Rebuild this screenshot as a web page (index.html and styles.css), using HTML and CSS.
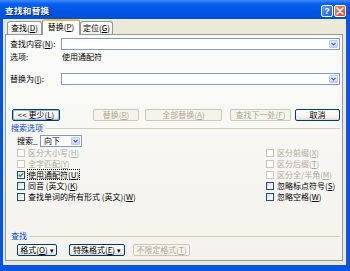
FILE: index.html
```html
<!DOCTYPE html>
<html lang="zh-CN">
<head>
    <meta charset="UTF-8">
    <title>查找和替换</title>
    <link rel="stylesheet" href="styles.css">
</head>
<body>
    <div class="window">
        <div class="titlebar">
            <span class="title">查找和替换</span>
            <div class="title-buttons">
                <span class="tbtn help">?</span>
                <span class="tbtn close">
                    <svg width="8" height="8" viewBox="0 0 8 8"><path d="M1 1L7 7M7 1L1 7" stroke="#fff" stroke-width="1.6" stroke-linecap="round"/></svg>
                </span>
            </div>
        </div>
        <div class="frame">
            <div class="client">
                <div class="tabs">
                    <div class="tab t1">查找(<u>D</u>)</div>
                    <div class="tab active">替换(<u>P</u>)</div>
                    <div class="tab t3">定位(<u>G</u>)</div>
                </div>
                <div class="panel">
                    <div class="row r-find">
                        <span class="label">查找内容(<u>N</u>):</span>
                        <div class="combo"><span class="arrow"><svg width="5" height="4" viewBox="0 0 5 4"><path d="M0.5 0.8L2.5 2.8L4.5 0.8" fill="none" stroke="#4d6185" stroke-width="1.2"/></svg></span></div>
                    </div>
                    <div class="row r-opt">
                        <span class="label">选项:</span>
                        <span class="value">使用通配符</span>
                    </div>
                    <div class="row r-repl">
                        <span class="label">替换为(<u>I</u>):</span>
                        <div class="combo"><span class="arrow"><svg width="5" height="4" viewBox="0 0 5 4"><path d="M0.5 0.8L2.5 2.8L4.5 0.8" fill="none" stroke="#4d6185" stroke-width="1.2"/></svg></span></div>
                    </div>
                    <div class="buttons">
                        <span class="btn b-less">&lt;&lt; 更少(<u>L</u>)</span>
                        <span class="btn dis b-repl">替换(<u>R</u>)</span>
                        <span class="btn dis b-all">全部替换(<u>A</u>)</span>
                        <span class="btn dis b-next">查找下一处(<u>F</u>)</span>
                        <span class="btn b-cancel">取消</span>
                    </div>
                    <div class="group g-search">搜索选项</div>
                    <div class="row r-dir">
                        <span class="dir-label">搜索_</span>
                        <div class="select">
                            <span class="select-text">向下</span>
                            <span class="arrow"><svg width="5" height="4" viewBox="0 0 5 4"><path d="M0.5 0.8L2.5 2.8L4.5 0.8" fill="none" stroke="#4d6185" stroke-width="1.2"/></svg></span>
                        </div>
                    </div>
                    <div class="checks">
                        <div class="check dis"><span class="box"></span>区分大小写(<u>H</u>)</div>
                        <div class="check dis"><span class="box"></span>区分前缀(<u>X</u>)</div>
                        <div class="check dis"><span class="box"></span>全字匹配(<u>Y</u>)</div>
                        <div class="check dis"><span class="box"></span>区分后缀(<u>T</u>)</div>
                        <div class="check"><span class="box on"><svg width="6" height="6" viewBox="0 0 6 6"><path d="M0.8 2.8L2.3 4.4L5.2 1.2" fill="none" stroke="#21a121" stroke-width="1.4"/></svg></span><span class="focus">使用通配符(<u>U</u>)</span></div>
                        <div class="check dis"><span class="box"></span>区分全/半角(<u>M</u>)</div>
                        <div class="check"><span class="box"></span>同音 (英文)(<u>K</u>)</div>
                        <div class="check"><span class="box"></span>忽略标点符号(<u>S</u>)</div>
                        <div class="check"><span class="box"></span>查找单词的所有形式 (英文)(<u>W</u>)</div>
                        <div class="check"><span class="box"></span>忽略空格(<u>W</u>)</div>
                    </div>
                    <div class="group g-find">查找</div>
                    <div class="buttons bottom">
                        <span class="btn b-fmt">格式(<u>O</u>) <i class="caret">▾</i></span>
                        <span class="btn b-special">特殊格式(<u>E</u>) <i class="caret">▾</i></span>
                        <span class="btn dis b-nofmt">不限定格式(<u>T</u>)</span>
                    </div>
                </div>
            </div>
        </div>
    </div>
</body>
</html>
```

FILE: styles.css
```css
body {
    margin: 0;
    font-family: "Noto Sans CJK SC", "Liberation Sans", sans-serif;
    font-size: 8px;
    line-height: 10px;
    color: #000;
}

u {
    text-decoration: underline;
}

.window {
    width: 350px;
    height: 271px;
    display: flex;
    flex-direction: column;
    background-color: #0a54e2;
}

.titlebar {
    height: 19px;
    flex: none;
    display: flex;
    align-items: center;
    justify-content: space-between;
    padding: 0 4px 0 5px;
    background: linear-gradient(#3d8cf7, #0a5ef0 20%, #0054e3 60%, #0050d8);
}

.title {
    color: white;
    font-weight: bold;
    font-size: 8.5px;
    letter-spacing: 0.4px;
    text-shadow: 1px 1px 0 #0a2a80;
}

.title-buttons {
    display: flex;
    gap: 1px;
    margin-top: 2px;
}

.tbtn {
    width: 12px;
    height: 12px;
    box-sizing: border-box;
    border: 1px solid white;
    border-radius: 2px;
    display: flex;
    align-items: center;
    justify-content: center;
    color: white;
    font-weight: bold;
    font-family: "Liberation Sans", sans-serif;
    font-size: 9px;
}

.help {
    background: linear-gradient(135deg, #5d97f5, #2460dc);
}

.close {
    background: linear-gradient(135deg, #f08a68, #d9431a);
}

.frame {
    flex: 1;
    display: flex;
    padding: 0 6px 6px 3px;
}

.client {
    flex: 1;
    display: flex;
    flex-direction: column;
    background-color: #ece9d8;
    padding: 0 3px 4px 2px;
}

.tabs {
    height: 15px;
    display: flex;
    align-items: flex-end;
    padding-left: 2px;
}

.tab {
    height: 13px;
    box-sizing: border-box;
    border: 1px solid #919b9c;
    border-bottom: none;
    border-radius: 3px 3px 0 0;
    background: linear-gradient(#fefefe, #f0efe8);
    display: flex;
    align-items: center;
    justify-content: center;
    white-space: nowrap;
}

.t1 {
    width: 35px;
}

.t3 {
    width: 33px;
}

.tab.active {
    width: 38px;
    height: 16px;
    margin-bottom: -1px;
    position: relative;
    background-color: #fbfbf9;
    background-image: none;
    border-top: 2px solid #f7b43a;
    padding-bottom: 2px;
}

.panel {
    flex: 1;
    border: 1px solid #919b9c;
    background: linear-gradient(#fbfbf9, #f3f2ec);
    padding: 3px 2px 0 4px;
    display: flex;
    flex-direction: column;
}

.row {
    display: flex;
    align-items: center;
    white-space: nowrap;
}

.label {
    width: 51px;
    flex: none;
}

.r-find {
    height: 12px;
}

.r-opt {
    height: 11px;
    margin-top: 1px;
}

.value {
    margin-left: 1px;
}

.r-repl {
    height: 12px;
    margin-top: 11px;
}

.combo {
    flex: 1;
    height: 12px;
    box-sizing: border-box;
    border: 1px solid #7f9db9;
    background-color: white;
    display: flex;
    justify-content: flex-end;
    padding: 1px;
}

.arrow {
    width: 9px;
    box-sizing: border-box;
    border: 1px solid #b9cbf3;
    border-radius: 1px;
    background: linear-gradient(#e3ebfe, #c3d3fa);
    display: flex;
    align-items: center;
    justify-content: center;
}

.buttons {
    display: flex;
    margin-top: 24px;
}

.btn {
    height: 12px;
    box-sizing: border-box;
    border: 1px solid #003c74;
    border-radius: 2px;
    background: linear-gradient(#ffffff, #f4f3ee 70%, #dcd8cc);
    display: flex;
    align-items: center;
    justify-content: center;
    white-space: nowrap;
}

.btn.dis {
    border-color: #c9c7ba;
    color: #aca899;
    background: #f5f4ea;
}

.b-less {
    width: 48px;
    margin-left: 2px;
    box-shadow: inset 0 0 0 1px #9db8ef;
}

.b-repl {
    width: 46px;
    margin-left: 33px;
}

.b-all {
    width: 77px;
    margin-left: 6px;
}

.b-next {
    width: 61px;
    margin-left: 8px;
}

.b-cancel {
    width: 45px;
    margin-left: 4px;
}

.group {
    display: flex;
    align-items: center;
    height: 10px;
    color: #0046d5;
    margin-left: 1px;
}

.group::after {
    content: "";
    flex: 1;
    height: 1px;
    background-color: #d0d0bf;
    margin-left: 2px;
}

.g-search {
    margin-top: 2px;
}

.r-dir {
    height: 12px;
    margin-top: 2px;
    padding-left: 7px;
}

.dir-label {
    width: 23px;
}

.select {
    width: 42px;
    height: 12px;
    box-sizing: border-box;
    border: 1px solid #7f9db9;
    background-color: white;
    display: flex;
    padding: 1px;
}

.select-text {
    flex: 1;
    padding-left: 2px;
    line-height: 8px;
}

.checks {
    display: grid;
    grid-template-columns: 249px 1fr;
    grid-auto-rows: 11px;
    padding-left: 7px;
}

.check {
    display: flex;
    align-items: center;
    white-space: nowrap;
}

.check.dis {
    color: #aca899;
}

.box {
    width: 8px;
    height: 8px;
    box-sizing: border-box;
    border: 1px solid #1c5180;
    background: linear-gradient(135deg, #dcdcd7, #fff);
    margin-right: 3px;
    flex: none;
    display: flex;
    align-items: center;
    justify-content: center;
}

.check.dis .box {
    border-color: #cac8bb;
    background: white;
}

.focus {
    outline: 1px dotted #000;
    line-height: 9px;
}

.g-find {
    margin-top: 29px;
}

.buttons.bottom {
    margin-top: 3px;
    padding-left: 7px;
}

.caret {
    font-style: normal;
    font-size: 7px;
    margin-left: 2px;
}

.b-fmt {
    width: 40px;
}

.b-special {
    width: 56px;
    margin-left: 12px;
}

.b-nofmt {
    width: 57px;
    margin-left: 8px;
}
```
